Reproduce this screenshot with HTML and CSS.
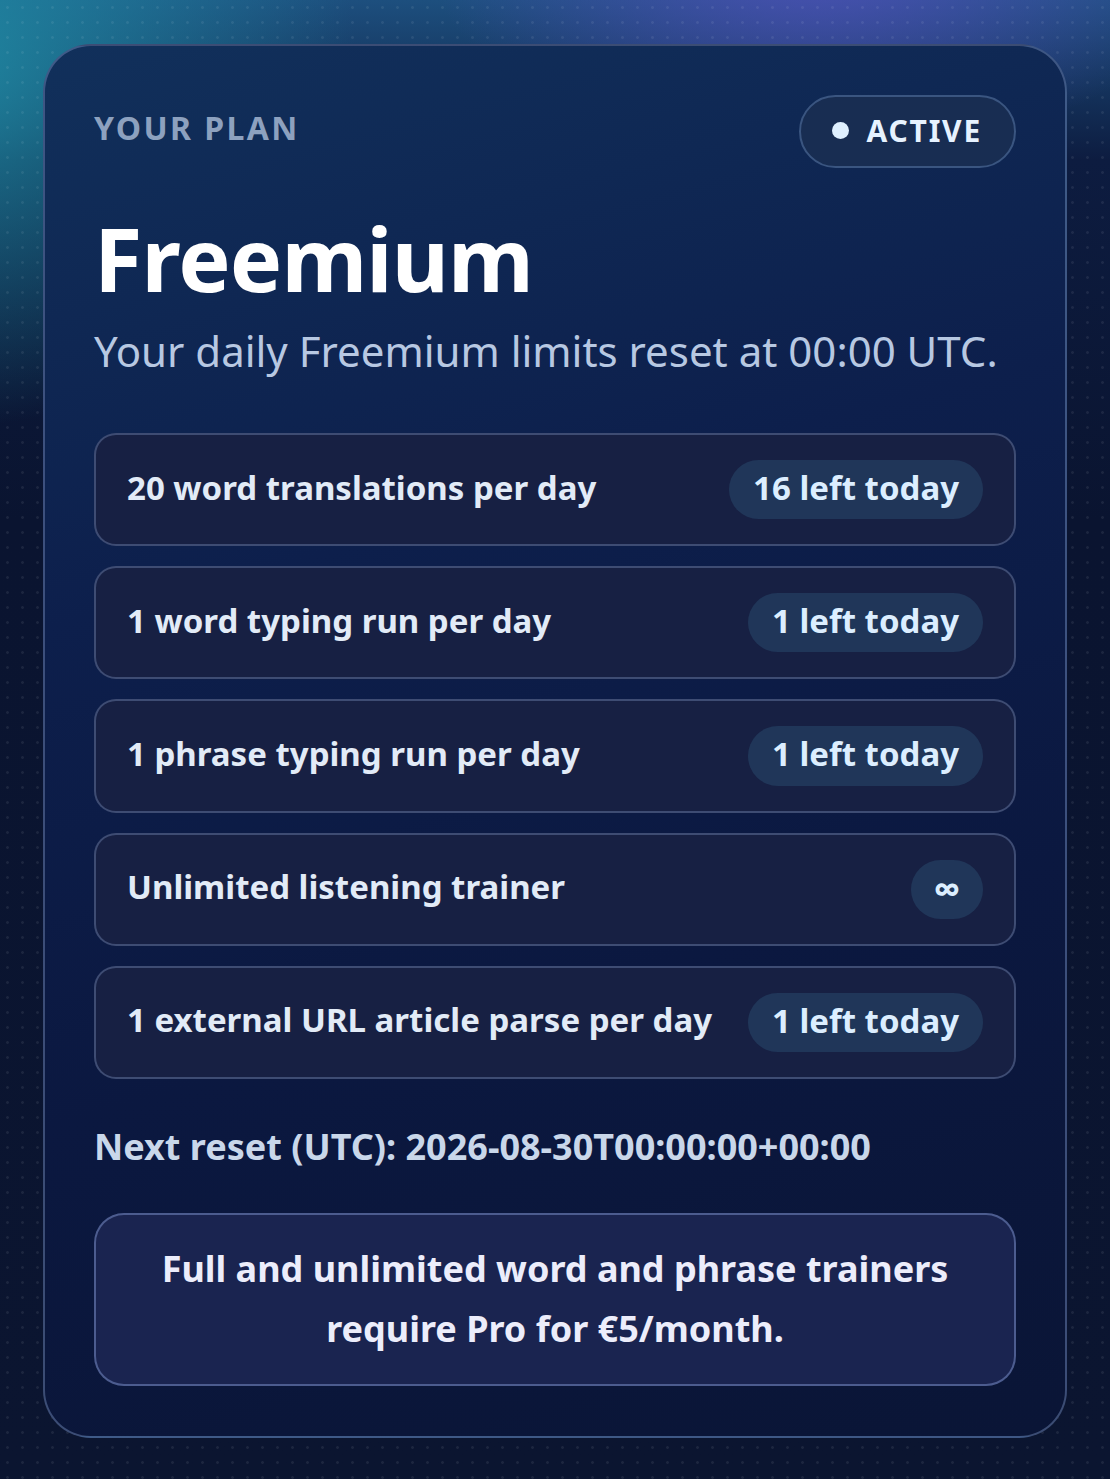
FILE: index.html
```html
<!DOCTYPE html>
<html lang="en">
<head>
<meta charset="utf-8">
<title>Your plan</title>
<link rel="stylesheet" href="styles.css">
</head>
<body>
<main class="page">
  <section class="card">
    <header class="card-head">
      <span class="eyebrow">YOUR PLAN</span>
      <span class="status"><span class="status-dot"></span>ACTIVE</span>
    </header>
    <h1 class="plan-name">Freemium</h1>
    <p class="plan-note">Your daily Freemium limits reset at 00:00 UTC.</p>
    <ul class="limits">
      <li class="limit"><span class="limit-label">20 word translations per day</span><span class="pill">16 left today</span></li>
      <li class="limit"><span class="limit-label">1 word typing run per day</span><span class="pill">1 left today</span></li>
      <li class="limit"><span class="limit-label">1 phrase typing run per day</span><span class="pill">1 left today</span></li>
      <li class="limit"><span class="limit-label">Unlimited listening trainer</span><span class="pill pill-inf">∞</span></li>
      <li class="limit"><span class="limit-label">1 external URL article parse per day</span><span class="pill">1 left today</span></li>
    </ul>
    <p class="next-reset">Next reset (UTC): 2026-08-30T00:00:00+00:00</p>
    <div class="upsell">Full and unlimited word and phrase trainers require Pro for €5/month.</div>
  </section>
</main>
</body>
</html>
```
FILE: styles.css
```css
* { box-sizing: border-box; }
html, body { margin: 0; padding: 0; }
body {
  min-height: 1479px;
  font-family: "Noto Sans", "Open Sans", sans-serif;
  color: #e3ecf8;
  background-color: #0a1430;
  background-image:
    radial-gradient(circle, rgba(255,255,255,0.07) 1.2px, transparent 1.6px),
    radial-gradient(ellipse 520px 260px at 820px -40px, rgba(84,80,190,0.85), transparent 75%),
    radial-gradient(ellipse 520px 460px at -60px 60px, rgba(32,140,165,0.95), transparent 80%),
    linear-gradient(180deg, #1d4f7e 0px, #0d1c40 160px, #0a1430 520px, #0b1530 100%);
  background-size: 15px 15px, 100% 100%, 100% 100%, 100% 100%;
}
.page {
  padding: 44px 43px 40px 43px;
}
.card {
  border: 2px solid rgba(120,145,190,0.45);
  border-radius: 48px;
  padding: 49px 49px 50px 49px;
  background: linear-gradient(165deg, #11305b 0%, #0d1f4c 35%, #0b1840 65%, #0a1536 100%);
}
.card-head {
  display: flex;
  justify-content: space-between;
  align-items: center;
}
.eyebrow {
  font-size: 32px;
  font-weight: 700;
  letter-spacing: 0.075em;
  color: #8da1bf;
  margin-top: -9px;
}
.status {
  display: inline-flex;
  align-items: center;
  gap: 18px;
  height: 73px;
  padding: 0 32px 3px 31px;
  border: 2px solid #3a5580;
  border-radius: 40px;
  background: #182d52;
  font-size: 30px;
  font-weight: 700;
  letter-spacing: 0.06em;
  color: #e6f2ff;
}
.status-dot {
  width: 17px;
  height: 17px;
  border-radius: 50%;
  background: #dff0ff;
}
.plan-name {
  margin: 42px 0 0 0;
  font-size: 88px;
  line-height: 97px;
  font-weight: 700;
  letter-spacing: -0.01em;
  color: #ffffff;
}
.plan-note {
  margin: 14px 0 0 0;
  font-size: 42px;
  line-height: 60px;
  color: #b7c8e2;
}
.limits {
  list-style: none;
  margin: 52px 0 0 0;
  padding: 0;
  display: flex;
  flex-direction: column;
  gap: 20px;
}
.limit {
  display: flex;
  align-items: center;
  justify-content: space-between;
  gap: 20px;
  padding: 25px 31px 25px 31px;
  border: 2px solid rgba(110,130,175,0.45);
  border-radius: 22px;
  background: #172043;
}
.limit-label {
  font-size: 33px;
  font-weight: 700;
  color: #e2ebf7;
  padding-bottom: 5px;
}
.pill {
  display: inline-flex;
  align-items: center;
  justify-content: center;
  height: 59.2px;
  padding: 0 24px 4px 24px;
  border-radius: 30px;
  background: #203659;
  font-size: 33px;
  font-weight: 700;
  color: #dceeff;
  white-space: nowrap;
}
.pill-inf {
  width: 72px;
  padding: 0 0 3px 0;
  font-size: 38px;
}
.next-reset {
  margin: 43px 0 0 0;
  font-size: 36px;
  line-height: 50px;
  font-weight: 700;
  color: #c9d7ea;
}
.upsell {
  margin-top: 41px;
  padding: 24px 60px 25px 60px;
  border: 2px solid rgba(110,130,185,0.6);
  border-radius: 30px;
  background: #1a2450;
  text-align: center;
  font-size: 36px;
  line-height: 60px;
  font-weight: 700;
  color: #ecedfb;
}
```
